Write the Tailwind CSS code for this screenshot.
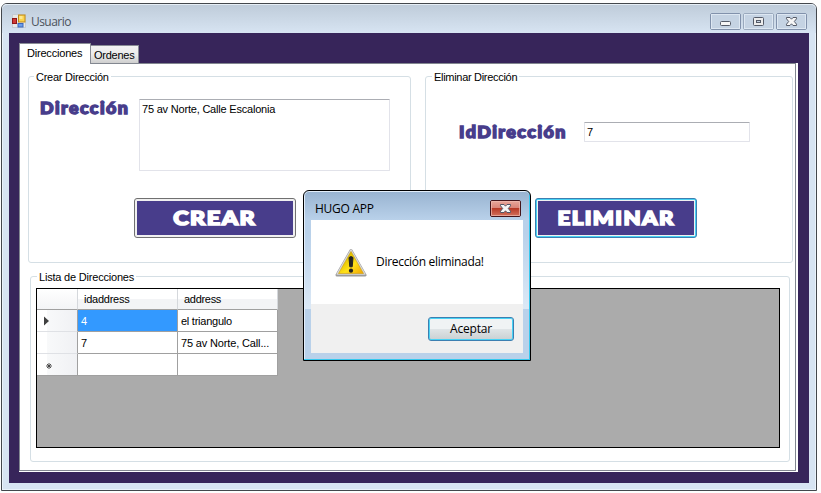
<!DOCTYPE html>
<html lang="es">
<head>
<meta charset="utf-8">
<title>Usuario</title>
<script src="https://cdn.jsdelivr.net/npm/@tailwindcss/browser@4"></script>
</head>
<body class="bg-[#fdfdfd] w-[821px] h-[493px] overflow-hidden font-['Liberation_Sans',sans-serif] text-[11px] leading-[13px] text-black">
<div class="pl-px pt-[3px]">
  <div class="relative w-[816px] h-[488px] rounded-t-[6px] border border-[#43474c] bg-[#d7e4f2] shadow-[inset_0_0_0_1px_#eaf3fb]">
    <!-- title bar -->
    <div class="h-[29px] flex items-start pl-[10px] pr-[9px] rounded-t-[5px] bg-linear-to-b from-[#becbd9] to-[#d7e4f2] shadow-[inset_0_1px_0_#e6eef6]">
      <svg class="mt-[10px] shrink-0" width="14" height="14" viewBox="0 0 14 14">
        <rect x="0.5" y="0.5" width="13" height="13" fill="#e8e8e6" stroke="#c5ccd3"/>
        <rect x="0.5" y="4.5" width="4" height="5" fill="#d03a35" stroke="#8f1717"/>
        <rect x="6.5" y="1" width="6.5" height="7" fill="#fbd34e" stroke="#bf8a1b"/>
        <rect x="7.5" y="2" width="3" height="3" fill="#fde88f"/>
        <rect x="6" y="9.5" width="5" height="3.5" fill="#6d9ee8" stroke="#3b67bd"/>
      </svg>
      <div class="ml-[5px] mt-[10px] text-[12px] leading-[16px] font-['Open_Sans',sans-serif] text-[#4c535b] tracking-[-0.55px]">Usuario</div>
      <div class="ml-auto mt-[9px] flex gap-[2px]">
        <svg width="31" height="17" viewBox="0 0 31 17"><rect x="0.5" y="0.5" width="30" height="16" rx="1.5" fill="#c5d3e3" stroke="#8191ab"/><rect x="1.5" y="1.5" width="28" height="14" fill="none" stroke="#dde7f2"/><rect x="10.5" y="8.5" width="10" height="4" rx="1" fill="#f6f6f6" stroke="#555b68"/></svg>
        <svg width="31" height="17" viewBox="0 0 31 17"><rect x="0.5" y="0.5" width="30" height="16" rx="1.5" fill="#c5d3e3" stroke="#9aa9bd"/><rect x="1.5" y="1.5" width="28" height="14" fill="none" stroke="#dde7f2"/><rect x="10.5" y="4.5" width="10" height="8" rx="1" fill="#ececec" stroke="#555b68"/><rect x="13.5" y="7.5" width="4" height="2" fill="#c5d3e3" stroke="#555b68"/></svg>
        <svg width="31" height="17" viewBox="0 0 31 17"><rect x="0.5" y="0.5" width="30" height="16" rx="1.5" fill="#c5d3e3" stroke="#8191ab"/><rect x="1.5" y="1.5" width="28" height="14" fill="none" stroke="#dde7f2"/><path d="M10.5 4.500h3.500l1.500 1.700 1.500-1.700h3.500v1.300l-2.200 2.700 2.200 2.700v1.300H17l-1.500-1.700-1.500 1.700h-3.500v-1.300l2.200-2.700-2.200-2.700z" fill="#f6f6f6" stroke="#555b68"/></svg>
      </div>
    </div>

    <!-- client area -->
    <div class="mx-[7px] h-[450px] bg-[#37255a] pl-[10px] pt-[10px]">
      <div class="flex items-end h-[20px]">
        <div class="w-[72px] h-[21px] -mb-px relative bg-white border border-b-0 border-[#898c95] pl-[7px] pt-[3px] whitespace-nowrap tracking-[-0.2px]">Direcciones</div>
        <div class="w-[48px] h-[18px] border border-l-0 border-b-0 border-[#898c95] bg-linear-to-b from-[#f2f2f2] via-[#ebebeb] to-[#cfcfcf] pl-[3px] pt-[3px] whitespace-nowrap tracking-[-0.25px]">Ordenes</div>
      </div>
      <div class="w-[779px] h-[409px] bg-white pr-[2px] pb-px">
        <div class="h-[408px] border border-[#828790] pt-[6px] pl-[8px]">
          <div class="flex gap-[14px]">
            <fieldset class="w-[383px] h-[193px] border border-[#d5dfe5] rounded-[3px]">
              <legend class="ml-[5px] px-[2px] h-[13px] leading-[14px] tracking-[-0.25px]">Crear Dirección</legend>
              <div class="flex pt-[16px]">
                <div class="w-[110px] pl-[11px]"><span class="inline-block origin-left scale-x-[1.115] font-['Lato',sans-serif] font-black text-[16px] leading-[18px] text-[#483d8b] [-webkit-text-stroke:1.4px_#483d8b] tracking-[1.3px]">Dirección</span></div>
                <div class="w-[251px] h-[72px] border border-[#e2e3ea] border-t-[#abadb3] rounded-[1px] pl-[2px] pt-[3px] tracking-[-0.2px]">75 av Norte, Calle Escalonia</div>
              </div>
              <button class="mt-[27px] ml-[105px] w-[162px] h-[40px] rounded-[3px] border border-[#707070] bg-[#f0f0f0] p-[2px] block">
                <span class="flex h-full items-center justify-center bg-[#483d8b] text-white font-['Lato',sans-serif] font-black text-[19px] tracking-[1.2px] [-webkit-text-stroke:1.6px_white]"><span class="inline-block scale-x-[1.23] -translate-y-px">CREAR</span></span>
              </button>
            </fieldset>
            <fieldset class="w-[368px] h-[193px] border border-[#d5dfe5] rounded-[3px]">
              <legend class="ml-[6px] px-[2px] h-[13px] leading-[14px] tracking-[-0.3px]">Eliminar Dirección</legend>
              <div class="flex pt-[39px]">
                <div class="w-[158px] pl-[33px] pt-px"><span class="inline-block origin-left scale-x-[1.12] font-['Lato',sans-serif] font-black text-[16px] leading-[18px] text-[#483d8b] [-webkit-text-stroke:1.4px_#483d8b] tracking-[1.3px]">IdDirección</span></div>
                <div class="w-[166px] h-[20px] border border-[#e2e3ea] border-t-[#abadb3] rounded-[1px] pl-[2px] pt-[3px]">7</div>
              </div>
              <button class="mt-[56px] ml-[109px] w-[162px] h-[40px] rounded-[3px] border border-[#3c7fb1] bg-[#48d3f5] p-px block">
                <span class="block h-full bg-[#f0f0f0] p-px"><span class="flex h-full items-center justify-center bg-[#483d8b] text-white font-['Lato',sans-serif] font-black text-[19px] tracking-[1.2px] [-webkit-text-stroke:1.6px_white]"><span class="inline-block scale-x-[1.17] -translate-y-px">ELIMINAR</span></span></span>
              </button>
            </fieldset>
          </div>
          <fieldset class="mt-[7px] ml-[2px] w-[760px] h-[192px] border border-[#d5dfe5] rounded-[3px]">
            <legend class="ml-[6px] px-[2px] h-[13px] leading-[15px] tracking-[-0.2px]">Lista de Direcciones</legend>
            <div class="ml-[5px] mt-[5px] w-[744px] h-[160px] border border-black bg-[#ababab]">
              <div class="grid grid-cols-[41px_100px_100px] grid-rows-[21px_22px_22px_22px] w-[241px] *:border-r *:border-b *:border-[#a0a0a0] *:bg-white *:flex *:items-center *:pl-[3px] *:pt-px *:whitespace-nowrap">
                <div class="border-r-[#d5d8dc]! bg-linear-to-b from-white to-[#f3f4f6]"></div>
                <div class="border-r-[#d5d8dc]! bg-linear-to-b from-white from-50% to-[#f3f4f6] to-50% pl-[6px]! pt-[2px] tracking-[-0.25px]">idaddress</div>
                <div class="border-r-[#d5d8dc]! bg-linear-to-b from-white from-50% to-[#f3f4f6] to-50% pl-[6px]! pt-[2px] tracking-[-0.3px]">address</div>
                <div class="bg-linear-to-r from-white from-25% via-[#f8f9fa] via-26% to-[#f0f1f4] border-b-[#dfe1e5]! pl-[7px]!"><svg width="5" height="10" viewBox="0 0 5 10"><path d="M0 0.500L5 5 0 9.500z" fill="#404040"/></svg></div>
                <div class="bg-[#3399ff]! text-white">4</div>
                <div class="tracking-[-0.25px]">el triangulo</div>
                <div class="bg-linear-to-r from-white from-25% via-[#f8f9fa] via-26% to-[#f0f1f4] border-b-[#dfe1e5]!"></div>
                <div>7</div>
                <div class="tracking-[-0.15px]">75 av Norte, Call...</div>
                <div class="bg-linear-to-r from-white from-25% via-[#f8f9fa] via-26% to-[#f0f1f4] pl-[9px]!"><svg class="mt-[2px]" width="6" height="6" viewBox="0 0 6 6"><path d="M3 0v6M0 3h6M1 1l4 4M5 1L1 5" stroke="#404040" stroke-width=".9"/></svg></div>
                <div></div>
                <div></div>
              </div>
            </div>
          </fieldset>
        </div>
      </div>
    </div>

    <!-- message box -->
    <div class="absolute left-[301px] top-[186px] w-[228px] h-[171px] rounded-t-[6px] border border-black bg-linear-to-b from-[#b9d1ea] from-25% via-[#dce9f6] via-70% to-[#b9d1ea] to-70% shadow-[inset_-1px_-1px_0_#35c8ee,inset_1px_1px_0_#e3eefa] font-['Open_Sans',sans-serif] text-[12px]">
      <div class="mx-px mt-px h-[28px] rounded-t-[4px] bg-linear-to-b from-[#99b4d1] to-[#b9d1ea] flex items-start pl-[10px] pr-[8px]">
        <div class="mt-[9px] leading-[16px] tracking-[-0.25px]">HUGO APP</div>
        <svg class="ml-auto mt-[8px]" width="31" height="17" viewBox="0 0 31 17">
          <defs><linearGradient id="closeRed" x2="0" y2="1"><stop offset="0" stop-color="#e9a99d"/><stop offset=".48" stop-color="#d98377"/><stop offset=".5" stop-color="#b83a27"/><stop offset="1" stop-color="#d4745f"/></linearGradient></defs>
          <rect x="0.5" y="0.5" width="30" height="16" rx="1.5" fill="url(#closeRed)" stroke="#43141a"/><rect x="1.5" y="1.5" width="28" height="14" fill="none" stroke="#f0bab0" stroke-opacity=".7"/>
          <path d="M10.5 4.500h3.500l1.500 1.700 1.500-1.700h3.500v1.300l-2.200 2.700 2.200 2.700v1.300H17l-1.500-1.700-1.500 1.700h-3.500v-1.300l2.200-2.700-2.200-2.700z" fill="#f6f6f6" stroke="#535666"/>
        </svg>
      </div>
      <div class="mx-[7px] h-[84px] bg-white flex items-start pl-[24px]">
        <svg class="mt-[28px]" width="32" height="30" viewBox="0 0 32 30">
          <defs><linearGradient id="warnYellow" x2="1" y2="1"><stop offset="0" stop-color="#c9a200"/><stop offset=".35" stop-color="#e8c800"/><stop offset=".6" stop-color="#ffe11a"/><stop offset="1" stop-color="#f0a400"/></linearGradient></defs>
          <path d="M16 2.500L30 27H2z" fill="#9c9c9c" stroke="#9c9c9c" stroke-width="3" stroke-linejoin="round"/>
          <path d="M16 2L29.800 26H2.200z" fill="#d8d8d8" stroke="#d8d8d8" stroke-width="1.500" stroke-linejoin="round"/>
          <path d="M16 3.500L28.500 25.500H3.500z" fill="url(#warnYellow)" stroke="#c99a10" stroke-width=".6"/>
          <path d="M14 9.500q2-1.800 4 0l-.8 9.300h-2.400z" fill="#222" stroke="#222"/>
          <circle cx="16" cy="22.700" r="2.100" fill="#222"/>
        </svg>
        <div class="ml-[9px] mt-[34px] leading-[16px] tracking-[-0.3px]">Dirección eliminada!</div>
      </div>
      <div class="mx-[7px] h-[49px] bg-[#f0f0f0] flex justify-end pr-[9px] pt-[13px]">
        <button class="w-[86px] h-[24px] rounded-[3px] border border-[#3c7fb1] bg-linear-to-b from-[#f0f3f4] from-48% via-[#dfe4e6] via-52% to-[#c9d0d2] shadow-[inset_0_0_0_1px_#48d3f5] leading-[22px] tracking-[-0.2px]">Aceptar</button>
      </div>
    </div>
  </div>
</div>
</body>
</html>
